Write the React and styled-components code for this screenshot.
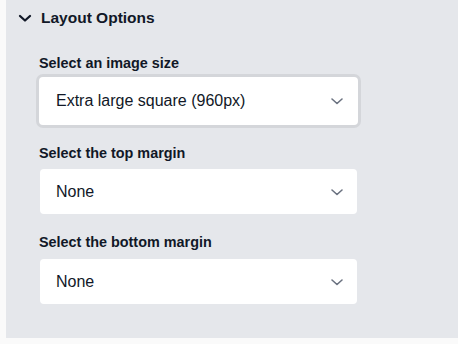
import React from "react";
import styled, { createGlobalStyle } from "styled-components";

const Global = createGlobalStyle`
  html, body { margin: 0; padding: 0; background: #ffffff; }
  body { font-family: "Liberation Sans", Arial, Helvetica, sans-serif; color: #111827; }
`;

const Page = styled.div`
  width: 458px;
  height: 344px;
  padding-left: 6px;
  box-sizing: border-box;
  background: #fafafa;
`;

const Panel = styled.section`
  background: #e5e7eb;
  height: 338px;
  box-sizing: border-box;
`;

const Header = styled.div`
  display: flex;
  align-items: center;
  gap: 8px;
  height: 36px;
  padding-left: 11px;
  font-size: 15.5px;
  font-weight: 700;
  color: #111827;
`;

const Body = styled.div`
  padding: 19px 0 0 33px;
  display: flex;
  flex-direction: column;
`;

const Field = styled.div`
  display: flex;
  flex-direction: column;
  margin-bottom: ${(p) => p.$mb}px;
`;

const Label = styled.label`
  font-size: 14.4px;
  font-weight: 700;
  color: #111827;
  margin-bottom: ${(p) => p.$gap}px;
  line-height: 16px;
`;

const Select = styled.div`
  width: ${(p) => (p.$focused ? 319 : 317)}px;
  height: ${(p) => (p.$focused ? 48 : 45)}px;
  margin-left: ${(p) => (p.$focused ? 0 : 1)}px;
  box-sizing: border-box;
  background: #ffffff;
  border-radius: 4px;
  box-shadow: ${(p) => (p.$focused ? "0 0 0 3px #d4d6da" : "none")};
  display: flex;
  align-items: center;
  justify-content: space-between;
  padding: 0 ${(p) => (p.$focused ? 13 : 12)}px 0 ${(p) => (p.$focused ? 17 : 16)}px;
  font-size: 16px;
  color: #111827;
`;

const Chevron = ({ size = 16, color = "#6b7280", width = 1.6 }) => (
  <svg width={size} height={size} viewBox="0 0 16 16" fill="none">
    <path d="M3 6 L8 10.5 L13 6" stroke={color} strokeWidth={width} strokeLinecap="round" strokeLinejoin="round" />
  </svg>
);

export default function App() {
  return (
    <>
      <Global />
      <Page>
        <Panel>
          <Header>
            <Chevron size={16} color="#111827" width={2.3} />
            <span>Layout Options</span>
          </Header>
          <Body>
            <Field $mb={20}>
              <Label $gap={6}>Select an image size</Label>
              <Select $focused>
                <span>Extra large square (960px)</span>
                <Chevron />
              </Select>
            </Field>
            <Field $mb={20}>
              <Label $gap={8}>Select the top margin</Label>
              <Select>
                <span>None</span>
                <Chevron />
              </Select>
            </Field>
            <Field $mb={0}>
              <Label $gap={9}>Select the bottom margin</Label>
              <Select>
                <span>None</span>
                <Chevron />
              </Select>
            </Field>
          </Body>
        </Panel>
      </Page>
    </>
  );
}
